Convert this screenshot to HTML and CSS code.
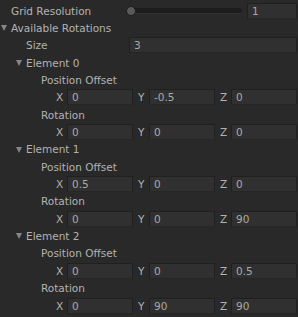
FILE: index.html
```html
<!DOCTYPE html>
<html lang="en">
<head>
	<meta charset="UTF-8">
	<title>Inspector</title>
	<link rel="stylesheet" href="styles.css">
</head>
<body>
	<div id="inspector">
		<div class="row">
			<span class="label lv0">Grid Resolution</span>
			<div class="slider"><span class="track"></span><span class="thumb"></span></div>
			<span class="field small">1</span>
		</div>
		<div class="row">
			<span class="fold"></span><span class="label lv0">Available Rotations</span>
		</div>
		<div class="row">
			<span class="label lv1">Size</span>
			<span class="field wide">3</span>
		</div>

		<div class="row"><span class="fold f1"></span><span class="label lv1">Element 0</span></div>
		<div class="row"><span class="label lv2">Position Offset</span></div>
		<div class="row vec">
			<span class="axis">X</span><span class="field">0</span>
			<span class="axis">Y</span><span class="field">-0.5</span>
			<span class="axis">Z</span><span class="field">0</span>
		</div>
		<div class="row"><span class="label lv2">Rotation</span></div>
		<div class="row vec">
			<span class="axis">X</span><span class="field">0</span>
			<span class="axis">Y</span><span class="field">0</span>
			<span class="axis">Z</span><span class="field">0</span>
		</div>

		<div class="row"><span class="fold f1"></span><span class="label lv1">Element 1</span></div>
		<div class="row"><span class="label lv2">Position Offset</span></div>
		<div class="row vec">
			<span class="axis">X</span><span class="field">0.5</span>
			<span class="axis">Y</span><span class="field">0</span>
			<span class="axis">Z</span><span class="field">0</span>
		</div>
		<div class="row"><span class="label lv2">Rotation</span></div>
		<div class="row vec">
			<span class="axis">X</span><span class="field">0</span>
			<span class="axis">Y</span><span class="field">0</span>
			<span class="axis">Z</span><span class="field">90</span>
		</div>

		<div class="row"><span class="fold f1"></span><span class="label lv1">Element 2</span></div>
		<div class="row"><span class="label lv2">Position Offset</span></div>
		<div class="row vec">
			<span class="axis">X</span><span class="field">0</span>
			<span class="axis">Y</span><span class="field">0</span>
			<span class="axis">Z</span><span class="field">0.5</span>
		</div>
		<div class="row"><span class="label lv2">Rotation</span></div>
		<div class="row vec">
			<span class="axis">X</span><span class="field">0</span>
			<span class="axis">Y</span><span class="field">90</span>
			<span class="axis">Z</span><span class="field">90</span>
		</div>
	</div>
</body>
</html>
```

FILE: styles.css
```css
* {
	margin: 0;
	padding: 0;
	box-sizing: border-box;
}

body {
	width: 298px;
	height: 317px;
	overflow: hidden;
	background: #292929;
	font-family: "DejaVu Sans", sans-serif;
	font-size: 10.5px;
	color: #b2b2b2;
}

#inspector {
	padding: 2px 1px 0 0;
}

.row {
	display: flex;
	align-items: center;
	height: 17.35px;
	position: relative;
}

.label {
	white-space: nowrap;
}

.lv0 { padding-left: 11px; }
.lv1 { padding-left: 26px; }
.lv2 { padding-left: 41px; }

.fold {
	position: absolute;
	left: 1px;
	top: 6px;
	width: 0;
	height: 0;
	border-left: 3.5px solid transparent;
	border-right: 3.5px solid transparent;
	border-top: 6px solid #858585;
}

.fold.f1 {
	left: 16px;
}

.field {
	display: flex;
	align-items: center;
	height: 16px;
	padding-left: 4px;
	background: #303030;
	border: 1px solid #202020;
	border-bottom-color: #262626;
	color: #a9a9a9;
	flex: 1;
	min-width: 0;
}

.field.small {
	flex: none;
	width: 50px;
	margin-left: 5px;
}

.field.wide {
	margin-left: auto;
	flex: none;
	width: 168px;
}

.slider {
	flex: 1;
	position: relative;
	height: 12px;
	margin-left: 35px;
}

.track {
	position: absolute;
	left: 5px;
	right: 0;
	top: 3px;
	height: 6px;
	border-radius: 3px;
	background: #1d1d1d;
	border-bottom: 1px solid #333;
}

.thumb {
	position: absolute;
	left: 0;
	top: 1px;
	width: 10px;
	height: 10px;
	border-radius: 50%;
	background: #595959;
	border: 1px solid #1c1c1c;
}

.vec {
	padding-left: 56px;
}

.axis {
	width: 11px;
	flex: none;
}

.vec .field + .axis {
	margin-left: 5px;
}
```
